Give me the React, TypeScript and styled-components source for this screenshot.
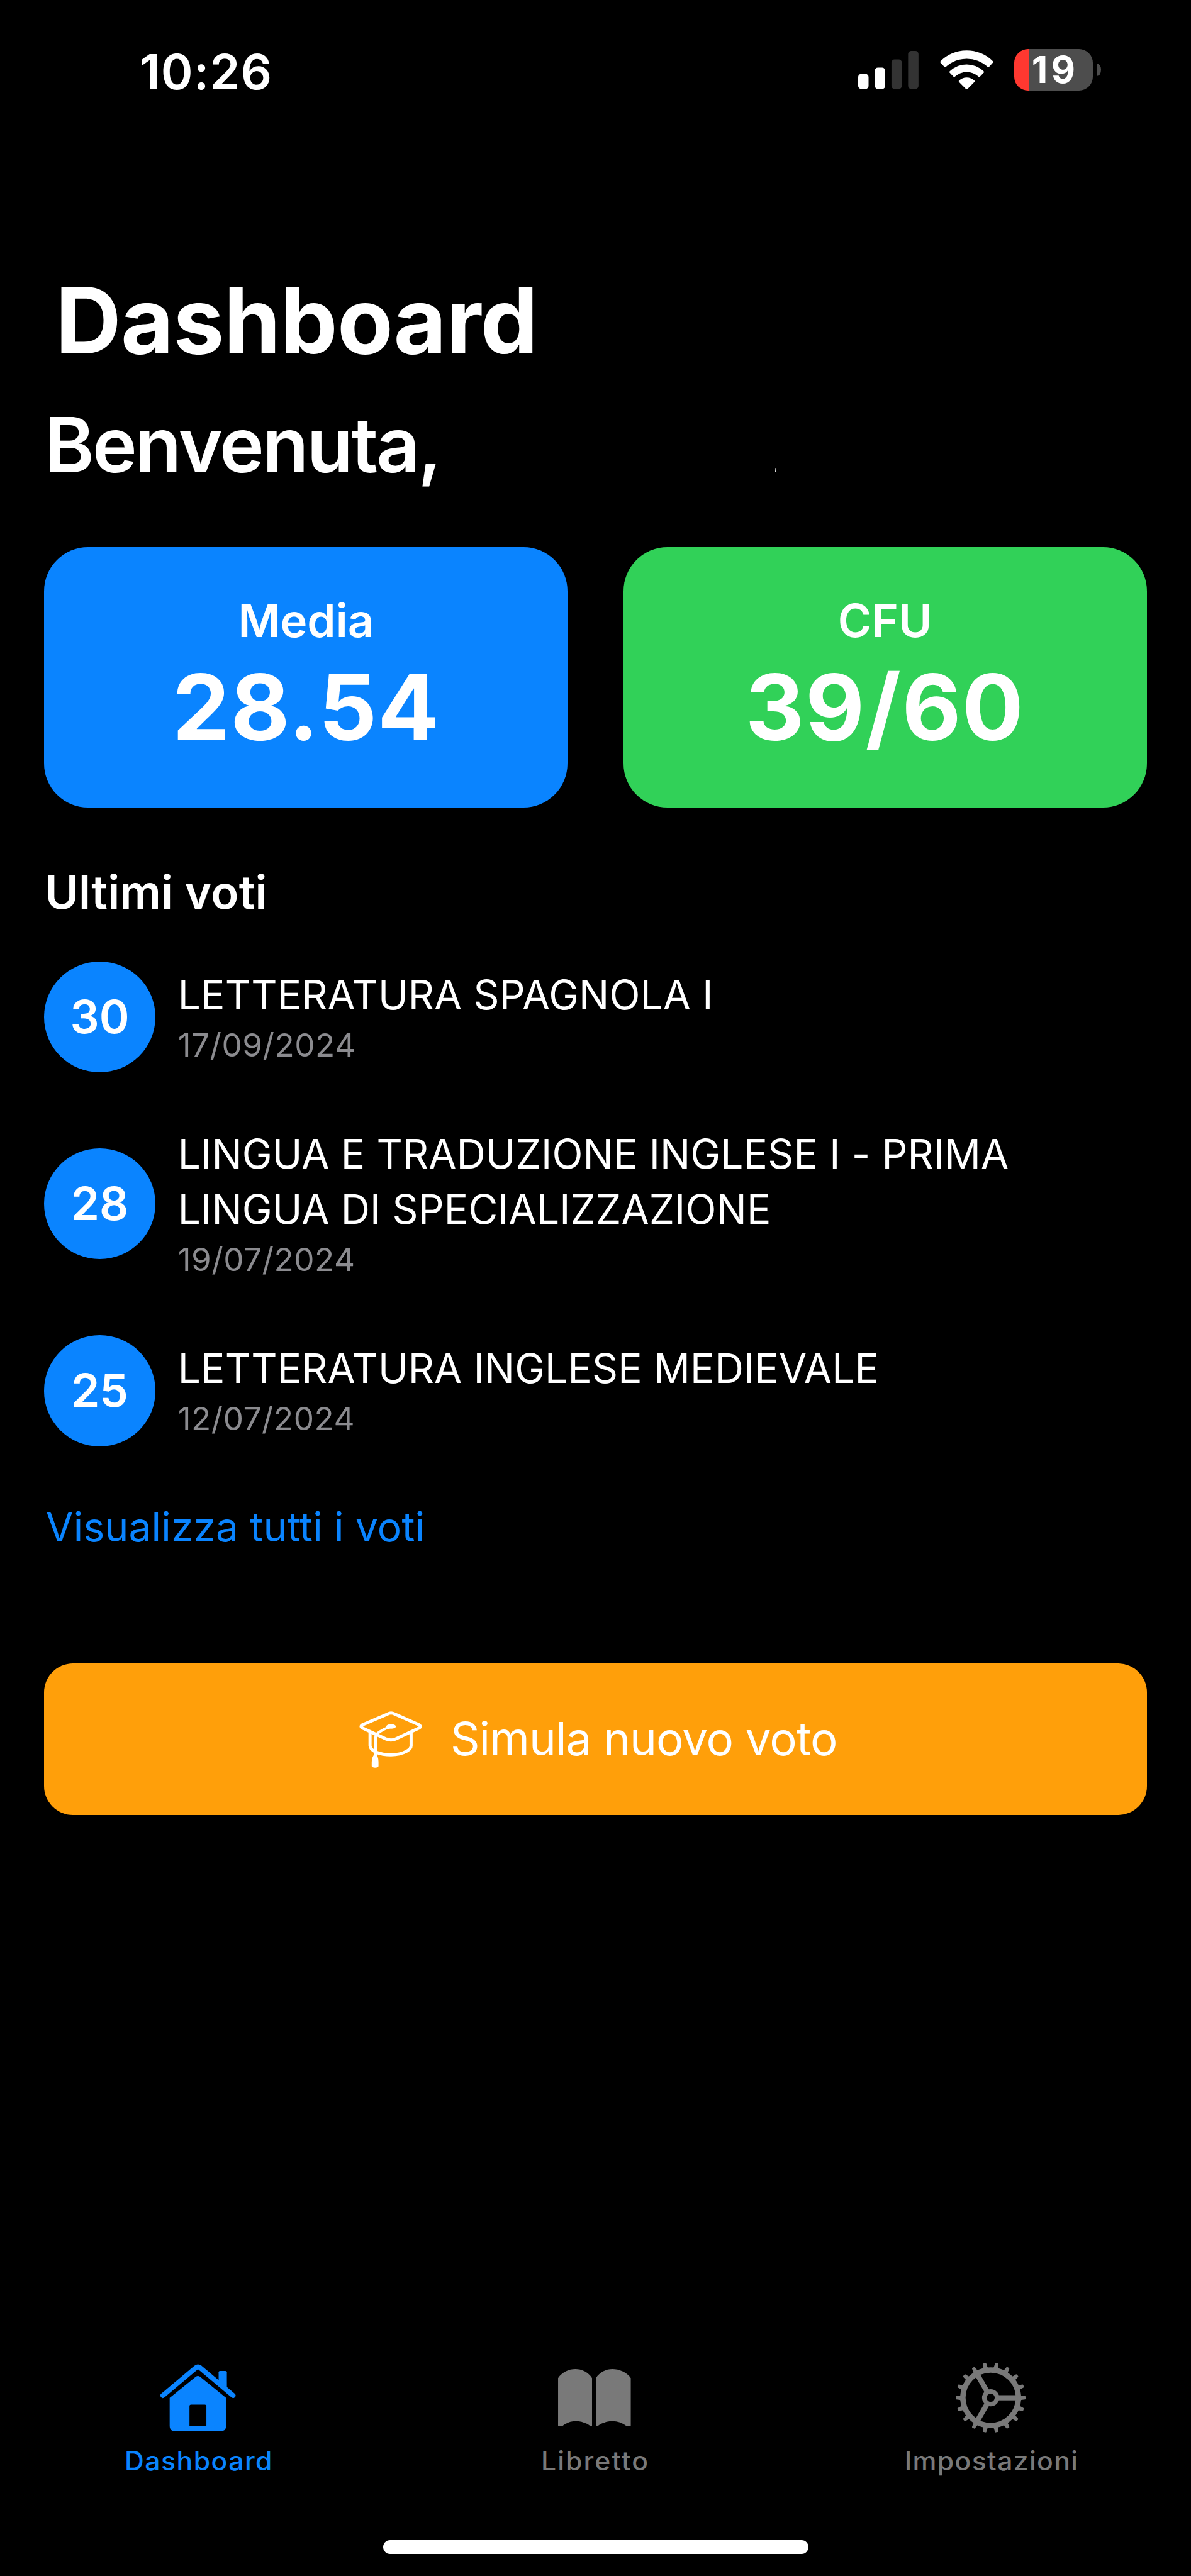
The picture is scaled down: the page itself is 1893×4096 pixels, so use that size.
import React from "react";
import styled, { createGlobalStyle } from "styled-components";

const BLUE = "#0a84ff";
const GREEN = "#31d158";
const ORANGE = "#ff9f0a";
const MUTED = "#8b8b8f";
const TAB_IDLE = "#797979";

const GlobalStyle = createGlobalStyle`
  * { box-sizing: border-box; }
  html, body { margin: 0; padding: 0; background: #000; }
  body { font-family: Inter, "Liberation Sans", sans-serif; color: #fff; }
`;

const Screen = styled.div`
  width: 1893px;
  height: 4096px;
  background: #000;
  display: flex;
  flex-direction: column;
  overflow: hidden;
`;

/* ---------- status bar ---------- */

const StatusBar = styled.header`
  height: 227px;
  flex: none;
  display: flex;
  align-items: center;
  justify-content: space-between;
  padding: 0 143px 0 222px;
`;

const Clock = styled.span`
  font-size: 77.1px;
  font-weight: 600;
  letter-spacing: 1.16px;
  line-height: 90px;
`;

const StatusIcons = styled.div`
  display: flex;
  align-items: center;
  gap: 33.6px;
  padding-bottom: 4.8px;
`;

const Battery = styled.div`
  display: flex;
  align-items: center;
  gap: 5.8px;
`;

const BatteryBody = styled.div<{ $fill: number }>`
  width: 125.2px;
  height: 66.7px;
  border-radius: 22px;
  display: flex;
  align-items: center;
  justify-content: center;
  padding-left: 5px;
  background: linear-gradient(to right, #ff3830 ${(p) => p.$fill}%, #4d4d4d ${(p) => p.$fill}%);
  font-size: 59px;
  font-weight: 700;
  letter-spacing: 5.6px;
  line-height: 66px;
`;

const BatteryNub = styled.div`
  width: 6.8px;
  height: 19.6px;
  background: #4d4d4d;
  border-radius: 0 100% 100% 0 / 0 50% 50% 0;
`;

/* ---------- content ---------- */

const Content = styled.main`
  display: flex;
  flex-direction: column;
  padding: 192.3px 70.4px 0;
`;

const PageTitle = styled.h1`
  margin: 0 0 0 17.6px;
  font-size: 145.1px;
  font-weight: 700;
  line-height: 180px;
  letter-spacing: -0.82px;
`;

const Greeting = styled.h2`
  display: flex;
  align-items: baseline;
  margin: 32.7px 0 0;
  font-size: 120.3px;
  font-weight: 600;
  line-height: 150px;
  letter-spacing: -3px;
`;

const NameMark = styled.i`
  width: 2px;
  height: 7px;
  margin-left: 532px;
  background: linear-gradient(to top, #fff, #777);
`;

const Cards = styled.section`
  display: grid;
  grid-template-columns: 1fr 1fr;
  gap: 88.1px;
  margin-top: 88.2px;
`;

const Card = styled.article<{ $color: string }>`
  height: 413.5px;
  border-radius: 70px;
  background: ${(p) => p.$color};
  display: flex;
  flex-direction: column;
  align-items: center;
  padding-top: 71.7px;
`;

const CardLabel = styled.span`
  font-size: 72.6px;
  font-weight: 600;
  line-height: 90px;
`;

const CardValue = styled.span<{ $tracking: number }>`
  margin-top: 1.8px;
  font-size: 145.1px;
  font-weight: 700;
  line-height: 180px;
  letter-spacing: ${(p) => p.$tracking}px;
`;

const SectionTitle = styled.h3`
  margin: 89.9px 0 0 1px;
  font-size: 72.6px;
  font-weight: 600;
  line-height: 90px;
  letter-spacing: 0.23px;
`;

const GradeList = styled.ul`
  list-style: none;
  margin: 65.6px 0 0;
  padding: 0;
  display: flex;
  flex-direction: column;
  gap: 85.8px;
`;

const GradeRow = styled.li`
  display: flex;
  align-items: center;
  gap: 36px;
`;

const GradeBadge = styled.span`
  width: 176.4px;
  height: 176.1px;
  flex: none;
  border-radius: 50%;
  background: ${BLUE};
  display: flex;
  align-items: center;
  justify-content: center;
  font-size: 72.6px;
  font-weight: 600;
  line-height: 90px;
`;

const GradeText = styled.div`
  display: flex;
  flex-direction: column;
`;

const ExamName = styled.span`
  max-width: 1420px;
  font-size: 64px;
  line-height: 88.1px;
  letter-spacing: 0.15px;
`;

const ExamDate = styled.time`
  font-size: 51.2px;
  line-height: 70.4px;
  letter-spacing: 0.5px;
  color: ${MUTED};
`;

const AllGradesLink = styled.a`
  align-self: flex-start;
  margin: 84.3px 0 0 2px;
  font-size: 64px;
  line-height: 88px;
  letter-spacing: 0.19px;
  color: ${BLUE};
  text-decoration: none;
`;

const SimulateButton = styled.button`
  margin: 173.1px 0 0;
  height: 240.6px;
  padding: 0 0 0 8.4px;
  border: 0;
  border-radius: 46px;
  background: ${ORANGE};
  color: #fff;
  font-family: inherit;
  font-size: 72.6px;
  font-weight: 400;
  line-height: 90px;
  letter-spacing: -0.91px;
  display: flex;
  align-items: center;
  justify-content: center;
  gap: 45px;
`;

/* ---------- tab bar ---------- */

const TabBar = styled.nav`
  margin-top: auto;
  display: grid;
  grid-template-columns: repeat(3, 630px);
`;

const Tab = styled.a<{ $active?: boolean }>`
  display: flex;
  flex-direction: column;
  align-items: center;
  color: ${(p) => (p.$active ? BLUE : TAB_IDLE)};
  text-decoration: none;
`;

const TabIcon = styled.span`
  height: 110px;
  display: flex;
  align-items: center;
`;

const TabLabel = styled.span<{ $tracking: number }>`
  margin-top: 19.6px;
  padding-left: 2px;
  font-size: 42.7px;
  font-weight: 500;
  line-height: 52px;
  letter-spacing: ${(p) => p.$tracking}px;
`;

const HomeIndicator = styled.div`
  flex: none;
  align-self: center;
  width: 676px;
  height: 22px;
  border-radius: 11px;
  background: #fff;
  margin: 100px 0 35.2px;
`;

/* ---------- icons ---------- */

const SignalIcon = () => (
  <svg width="96" height="60.5" viewBox="0 0 96 60.5">
    {[24, 34, 47, 60.5].map((h, i) => (
      <rect key={h} x={i * 26.45} y={60.5 - h} width="16.5" height={h} rx="5" fill={i < 2 ? "#fff" : "#333"} />
    ))}
  </svg>
);

const WifiIcon = () => (
  <svg width="85" height="62" viewBox="0 0 85 62" fill="#fff">
    <path d="M1 19.8Q-.3 18.6 1 17.2A59 59 0 0 1 84 17.2Q85.3 18.6 84 19.8L77.8 26.6Q76.8 27.6 75.8 26.6A48.6 48.6 0 0 0 9.2 26.6Q8.2 27.6 7.2 26.6Z" />
    <path d="M15.6 35.8Q14.4 34.6 15.6 33.2A38.9 38.9 0 0 1 69.4 33.2Q70.6 34.6 69.4 35.8L63.4 42Q62.4 43 61.4 42A27.8 27.8 0 0 0 23.6 42Q22.6 43 21.6 42Z" />
    <path d="M30.4 50.4Q29.2 49.2 30.4 48A18 18 0 0 1 54.6 48Q55.8 49.2 54.6 50.4L43.7 61.4Q42.5 62.5 41.3 61.4Z" />
  </svg>
);

const GraduationCapIcon = () => (
  <svg width="100.1" height="90.8" viewBox="75 135 566 513" fill="none" stroke="#fff" strokeWidth="28" strokeLinejoin="round">
    <path d="M332 164Q360 149 392 164L612 262Q636 277 612 292L400 390Q360 408 318 390L105 292Q78 277 105 262Z" />
    <path d="M172 330V450Q172 480 222 507Q285 532 360 532Q440 532 500 500Q541 478 541 450V325" />
    <path d="M350 283Q290 298 232 345Q222 355 222 375V550" strokeWidth="23" />
    <ellipse cx="361" cy="277" rx="43" ry="21" fill="#fff" stroke="none" />
    <path d="M205 535H233Q249 560 248 600V634Q246 648 218 648Q190 648 187 634V600Q187 560 205 535Z" fill="#fff" stroke="none" />
  </svg>
);

const HouseIcon = () => (
  <svg width="119.4" height="106.5" viewBox="395 155 675 602" fill="currentColor">
    <path
      d="M417 438L716 186Q732 174 749 186L1048 438"
      fill="none"
      stroke="currentColor"
      strokeWidth="44"
      strokeLinecap="round"
      strokeLinejoin="round"
    />
    <path d="M918 320V230Q918 217 931 217H979Q992 217 992 230V390Z" />
    <path
      fillRule="evenodd"
      d="M752 270L985 459V712Q985 757 940 757H523Q478 757 478 712V459L712 270Q732 255 752 270ZM670 520Q656 520 656 534V710H808V534Q808 520 794 520Z"
    />
  </svg>
);

const BookIcon = () => (
  <svg width="115.6" height="91.3" viewBox="280 197 653 516" fill="currentColor">
    <path d="M280 278C318 222 378 197 435 197S550 222 585 278V705H566C530 680 485 665 440 665S352 680 314 713H280Z" />
    <path d="M620 278C655 222 712 197 768 197S897 222 933 278V713H899C862 682 815 665 768 665S676 680 640 705H620Z" />
  </svg>
);

const GearIcon = () => (
  <svg width="111.2" height="111.2" viewBox="-104.7 -104.7 209.4 209.4" fill="none" stroke="currentColor">
    <circle r="83.2" strokeWidth="16" />
    <circle r="19" strokeWidth="13.6" />
    {[0, 120, 240].map((a) => (
      <path key={a} d="M23 0H80" strokeWidth="15.5" transform={`rotate(${a})`} />
    ))}
    {Array.from({ length: 18 }, (_, i) => (
      <path
        key={i}
        d="M86 -10L92 -6.5L102.5 -5Q104.7 -4.6 104.7 -3V3Q104.7 4.6 102.5 5L92 6.5L86 10Z"
        fill="currentColor"
        stroke="none"
        transform={`rotate(${i * 20})`}
      />
    ))}
  </svg>
);

/* ---------- data ---------- */

const grades = [
  { grade: 30, name: "LETTERATURA SPAGNOLA I", date: "17/09/2024" },
  { grade: 28, name: "LINGUA E TRADUZIONE INGLESE I - PRIMA LINGUA DI SPECIALIZZAZIONE", date: "19/07/2024" },
  { grade: 25, name: "LETTERATURA INGLESE MEDIEVALE", date: "12/07/2024" },
];

const tabs = [
  { label: "Dashboard", tracking: 1.48, icon: <HouseIcon />, active: true },
  { label: "Libretto", tracking: 2.1, icon: <BookIcon />, active: false },
  { label: "Impostazioni", tracking: 1.35, icon: <GearIcon />, active: false },
];

export default function App() {
  return (
    <Screen>
      <GlobalStyle />
      <StatusBar>
        <Clock>10:26</Clock>
        <StatusIcons>
          <SignalIcon />
          <WifiIcon />
          <Battery>
            <BatteryBody $fill={19.2}>19</BatteryBody>
            <BatteryNub />
          </Battery>
        </StatusIcons>
      </StatusBar>

      <Content>
        <PageTitle>Dashboard</PageTitle>
        <Greeting>
          Benvenuta,
          <NameMark />
        </Greeting>

        <Cards>
          <Card $color={BLUE}>
            <CardLabel>Media</CardLabel>
            <CardValue $tracking={0.71}>28.54</CardValue>
          </Card>
          <Card $color={GREEN}>
            <CardLabel>CFU</CardLabel>
            <CardValue $tracking={1.47}>39/60</CardValue>
          </Card>
        </Cards>

        <SectionTitle>Ultimi voti</SectionTitle>
        <GradeList>
          {grades.map((g) => (
            <GradeRow key={g.name}>
              <GradeBadge>{g.grade}</GradeBadge>
              <GradeText>
                <ExamName>{g.name}</ExamName>
                <ExamDate>{g.date}</ExamDate>
              </GradeText>
            </GradeRow>
          ))}
        </GradeList>
        <AllGradesLink>Visualizza tutti i voti</AllGradesLink>

        <SimulateButton>
          <GraduationCapIcon />
          Simula nuovo voto
        </SimulateButton>
      </Content>

      <TabBar>
        {tabs.map((t) => (
          <Tab key={t.label} $active={t.active}>
            <TabIcon>{t.icon}</TabIcon>
            <TabLabel $tracking={t.tracking}>{t.label}</TabLabel>
          </Tab>
        ))}
      </TabBar>
      <HomeIndicator />
    </Screen>
  );
}
